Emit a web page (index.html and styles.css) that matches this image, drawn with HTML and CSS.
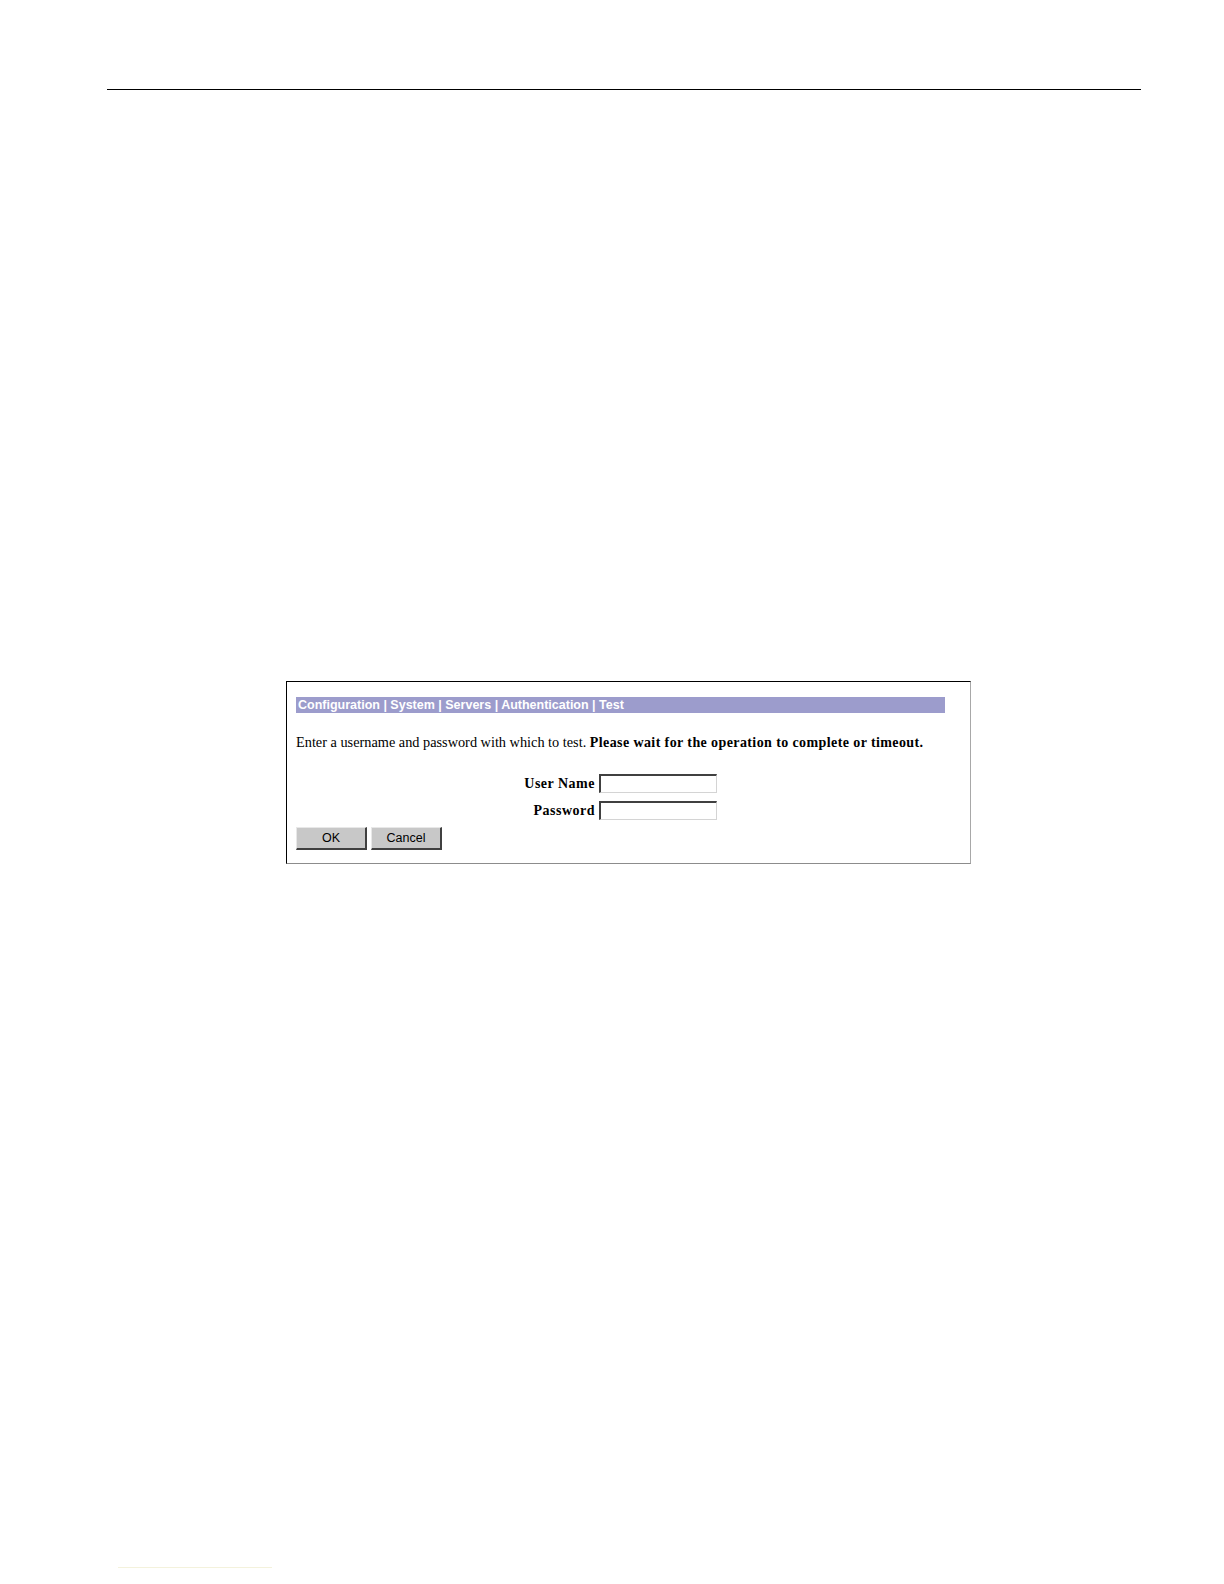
FILE: index.html
```html
<!DOCTYPE html>
<html>
<head>
<meta charset="utf-8">
<link rel="stylesheet" href="styles.css">
</head>
<body>
<div class="page">
  <div class="rule"></div>
  <div class="panel">
    <div class="crumbs">Configuration | System | Servers | Authentication | Test</div>
    <p class="intro">Enter a username and password with which to test. <b class="strong">Please wait for the operation to complete or timeout.</b></p>
    <div class="form">
      <label class="lbl">User Name</label><span class="field"></span>
      <label class="lbl">Password</label><span class="field"></span>
    </div>
    <div class="buttons">
      <span class="btn">OK</span><span class="btn">Cancel</span>
    </div>
  </div>
  <div class="footline"></div>
</div>
</body>
</html>
```

FILE: styles.css
```css
html, body {
  margin: 0;
  padding: 0;
  background: #fff;
  overflow: hidden;
}
.page {
  padding-top: 89px;
}
.rule {
  margin-left: 107px;
  width: 1034px;
  height: 0;
  border-top: 1px solid #000;
}
.panel {
  margin-top: 591px;
  margin-left: 286px;
  width: 685px;
  height: 183px;
  box-sizing: border-box;
  border-top: 1px solid #000;
  border-left: 1px solid #000;
  border-right: 1px solid #a8a8a8;
  border-bottom: 1px solid #8c8c8c;
  padding: 15px 0 0 9px;
}
.crumbs {
  width: 649px;
  height: 16px;
  background: #9c9ccc;
  color: #fff;
  font-family: "Liberation Sans", Arial, sans-serif;
  font-weight: bold;
  font-size: 12.5px;
  line-height: 16px;
  padding-left: 2px;
  box-sizing: border-box;
  white-space: nowrap;
}
.intro {
  margin: 20px 0 0 0;
  font-family: "Liberation Serif", "Times New Roman", serif;
  font-size: 14.3px;
  line-height: 18px;
  color: #000;
  white-space: nowrap;
}
.strong {
  font-size: 14px;
  letter-spacing: 0.4px;
}
.form {
  margin-top: 22px;
  display: grid;
  grid-template-columns: 299px 118px;
  column-gap: 4px;
  row-gap: 8px;
  align-items: center;
}
.lbl {
  text-align: right;
  font-family: "Liberation Serif", "Times New Roman", serif;
  font-weight: bold;
  font-size: 14px;
  letter-spacing: 0.5px;
  line-height: 19px;
}
.field {
  display: block;
  height: 19px;
  box-sizing: border-box;
  border-top: 2px solid #404040;
  border-left: 2px solid #404040;
  border-right: 1px solid #d4d4d4;
  border-bottom: 1px solid #d4d4d4;
  background: #fff;
}
.buttons {
  margin-top: 7px;
  display: flex;
  gap: 4px;
}
.btn {
  display: block;
  width: 71px;
  height: 23px;
  box-sizing: border-box;
  background: #c8c8c8;
  border-top: 1px solid #e8e8e8;
  border-left: 1px solid #e8e8e8;
  border-right: 2px solid #404040;
  border-bottom: 2px solid #404040;
  font-family: "Liberation Sans", Arial, sans-serif;
  font-size: 12.5px;
  line-height: 21px;
  text-align: center;
  color: #000;
}
.footline {
  margin-top: 703px;
  margin-left: 118px;
  width: 154px;
  height: 1px;
  background: #f4f2dc;
}
```
